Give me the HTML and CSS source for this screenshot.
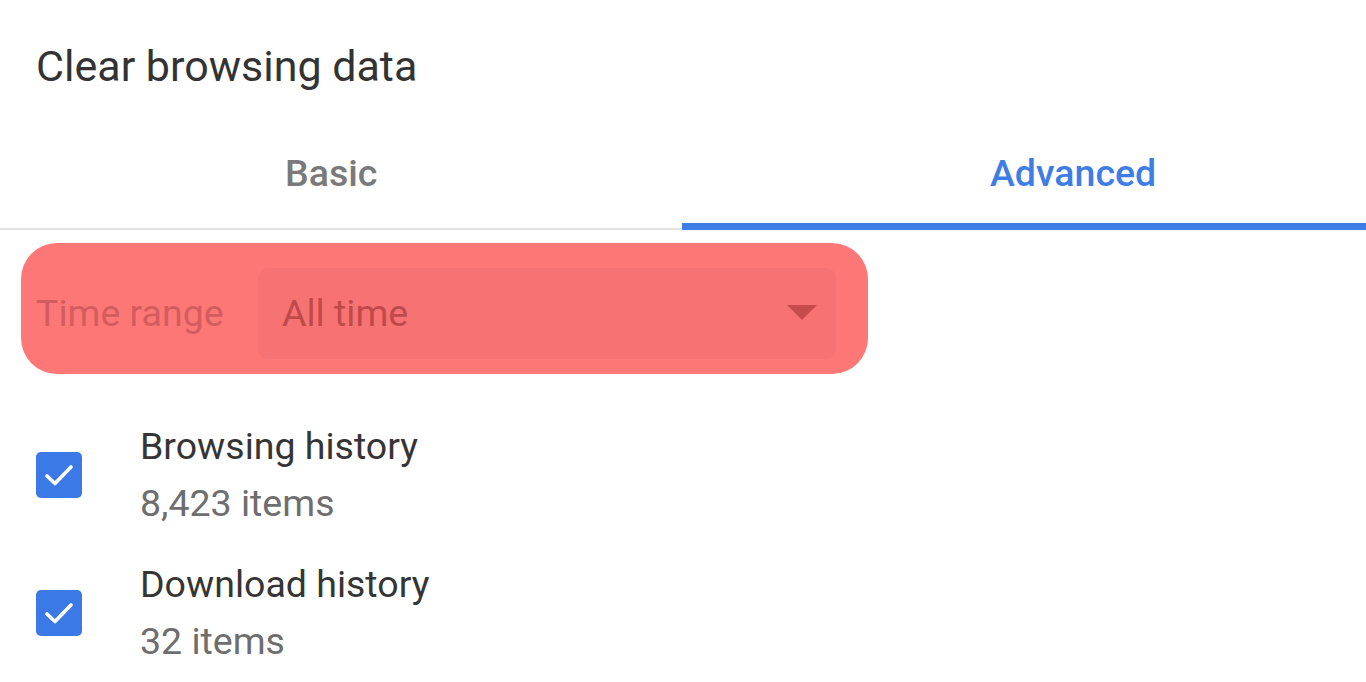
FILE: index.html
```html
<!DOCTYPE html>
<html lang="en">
<head>
<meta charset="utf-8">
<title>Clear browsing data</title>
<link rel="stylesheet" href="styles.css">
</head>
<body>
<div class="dialog">
  <h1 class="title">Clear browsing data</h1>
  <div class="tabs">
    <div class="tab tab-basic">Basic</div>
    <div class="tab tab-advanced active">Advanced</div>
  </div>
  <div class="highlight">
    <span class="range-label">Time range</span>
    <div class="select">
      <span class="select-value">All time</span>
      <svg class="arrow" width="30" height="15" viewBox="0 0 30 15"><path d="M0 0 H30 L15 15 Z" fill="#c84b4b"/></svg>
    </div>
  </div>
  <div class="items">
    <div class="item">
      <div class="checkbox">
        <svg width="46" height="46" viewBox="0 0 46 46"><path d="M11 24 L19 31.5 L35 15" fill="none" stroke="#fff" stroke-width="3.6" stroke-linecap="round" stroke-linejoin="round"/></svg>
      </div>
      <div class="item-text">
        <div class="item-title">Browsing history</div>
        <div class="item-sub">8,423 items</div>
      </div>
    </div>
    <div class="item">
      <div class="checkbox">
        <svg width="46" height="46" viewBox="0 0 46 46"><path d="M11 24 L19 31.5 L35 15" fill="none" stroke="#fff" stroke-width="3.6" stroke-linecap="round" stroke-linejoin="round"/></svg>
      </div>
      <div class="item-text">
        <div class="item-title">Download history</div>
        <div class="item-sub">32 items</div>
      </div>
    </div>
  </div>
</div>
</body>
</html>
```

FILE: styles.css
```css
html, body {
  margin: 0;
  padding: 0;
  background: #ffffff;
}
body {
  font-family: Roboto, "Noto Sans", "Liberation Sans", sans-serif;
  width: 1366px;
  height: 682px;
  overflow: hidden;
}
.dialog {
  display: flex;
  flex-direction: column;
}
.title {
  margin: 0;
  padding: 42px 0 0 36px;
  font-size: 43px;
  line-height: 48px;
  font-weight: 400;
  color: #333333;
}
.tabs {
  display: flex;
  border-bottom: 2px solid #e2e2e2;
}
.tab {
  width: 50%;
  box-sizing: border-box;
  font-size: 37.5px;
  line-height: 44px;
  font-weight: 500;
  padding-top: 61px;
  padding-bottom: 28px;
  border-bottom: 7px solid transparent;
  margin-bottom: -2px;
  color: #7a7a7a;
}
.tab-basic {
  width: 682px;
  padding-left: 285px;
}
.tab-advanced {
  width: 684px;
  padding-left: 308px;
}
.tab.active {
  color: #3f7de6;
  border-bottom-color: #3f7de6;
}
.highlight {
  margin: 13px 0 0 21px;
  width: 847px;
  height: 131px;
  box-sizing: border-box;
  background: #fe7777;
  border-radius: 36px;
  display: flex;
  align-items: center;
  padding-left: 15px;
}
.range-label {
  font-size: 37.5px;
  color: #d35d5d;
  width: 222px;
  margin-top: 8px;
}
.select {
  width: 578px;
  height: 91px;
  margin-top: 9px;
  background: #f77373;
  border-radius: 10px;
  display: flex;
  align-items: center;
  justify-content: space-between;
  padding: 0 19px 0 24px;
  box-sizing: border-box;
}
.select-value {
  font-size: 37.5px;
  color: #c04a4a;
}
.arrow {
  display: block;
  margin-bottom: 2px;
}
.items {
  margin-top: 32px;
  display: flex;
  flex-direction: column;
}
.item {
  display: flex;
  align-items: center;
  padding: 12px 0;
}
.checkbox {
  width: 46px;
  height: 46px;
  margin-left: 36px;
  margin-right: 58px;
  background: #3b79e6;
  border-radius: 5px;
  flex: none;
}
.checkbox svg {
  display: block;
}
.item-text {
  font-size: 37.5px;
  line-height: 57px;
}
.item-title {
  color: #353535;
}
.item-sub {
  color: #6e6e6e;
}
```
